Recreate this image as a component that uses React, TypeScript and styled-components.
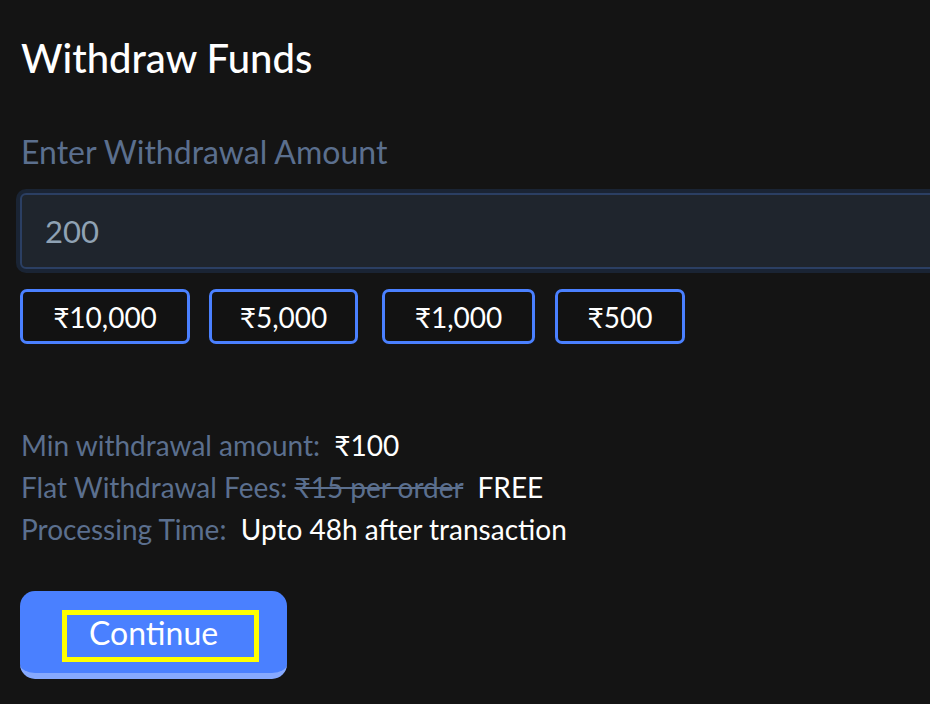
import { createGlobalStyle } from 'styled-components';
import styled from "styled-components";

const GlobalStyle = createGlobalStyle`
    html, body {
        margin: 0;
        padding: 0;
        background-color: #141414;
        overflow: hidden;
    }
    body {
        font-family: Lato, "Noto Sans", sans-serif;
    }
`;

const Page = styled.div`
    display: flex;
    flex-direction: column;
    padding: 25px 0 0 20px;
    min-height: 704px;
    box-sizing: border-box;
`;

const Title = styled.h1`
    margin: 0 0 0 1px;
    font-size: 40px;
    font-weight: 500;
    line-height: 66px;
    color: #ffffff;
`;

const Label = styled.label`
    margin: 41px 0 0 1px;
    font-size: 32px;
    line-height: 40px;
    color: #5b6f8e;
`;

const AmountInput = styled.input`
    box-sizing: border-box;
    width: 960px;
    height: 76px;
    margin-top: 21px;
    padding: 0 0 0 23px;
    font-family: Lato, sans-serif;
    font-size: 31px;
    color: #8fa2b4;
    background-color: #1f252d;
    border: 2px solid #2b3f63;
    border-radius: 6px;
    box-shadow: 0 0 0 4px #1a2434;
    outline: none;
`;

const ChipRow = styled.div`
    display: flex;
    margin-top: 20px;
`;

const Chip = styled.button<{ $w: number; $mr: number }>`
    box-sizing: border-box;
    width: ${(p) => p.$w}px;
    height: 55px;
    padding: 0;
    margin-right: ${(p) => p.$mr}px;
    font-family: Lato, sans-serif;
    font-size: 28px;
    color: #ffffff;
    background-color: #121212;
    border: 3px solid #4a80ff;
    border-radius: 7px;
    cursor: pointer;
`;

const Info = styled.div`
    display: flex;
    flex-direction: column;
    margin-top: 80px;
    margin-left: 1px;
`;

const InfoRow = styled.div`
    font-size: 28px;
    line-height: 42px;
    color: #5b6f8e;
    white-space: pre;
`;

const Value = styled.span`
    color: #ffffff;
`;

const Struck = styled.span`
    text-decoration: line-through;
`;

const ContinueBtn = styled.button`
    align-self: flex-start;
    margin-top: 41px;
    padding: 19px 28px 11px 42px;
    background-color: #4a80ff;
    border: none;
    border-bottom: 6px solid #86a9ff;
    border-radius: 15px;
    cursor: pointer;
`;

const BtnText = styled.span`
    display: block;
    padding: 0 36px 6px 22px;
    border: 5px solid #ffff00;
    font-family: Lato, sans-serif;
    font-size: 32px;
    line-height: 36px;
    color: #ffffff;
`;

const amounts = [
    { label: "₹10,000", w: 170, mr: 19 },
    { label: "₹5,000", w: 149, mr: 24 },
    { label: "₹1,000", w: 153, mr: 20 },
    { label: "₹500", w: 130, mr: 0 },
];

const App = () => {
    return (
        <>
            <GlobalStyle />
            <Page>
                <Title>Withdraw Funds</Title>
                <Label>Enter Withdrawal Amount</Label>
                <AmountInput type="text" defaultValue="200" />
                <ChipRow>
                    {amounts.map((a) => (
                        <Chip key={a.label} $w={a.w} $mr={a.mr}>{a.label}</Chip>
                    ))}
                </ChipRow>
                <Info>
                    <InfoRow>Min withdrawal amount:  <Value>₹100</Value></InfoRow>
                    <InfoRow>Flat Withdrawal Fees: <Struck>₹15 per order</Struck>  <Value>FREE</Value></InfoRow>
                    <InfoRow>Processing Time:  <Value>Upto 48h after transaction</Value></InfoRow>
                </Info>
                <ContinueBtn>
                    <BtnText>Continue</BtnText>
                </ContinueBtn>
            </Page>
        </>
    );
};

export default App;
